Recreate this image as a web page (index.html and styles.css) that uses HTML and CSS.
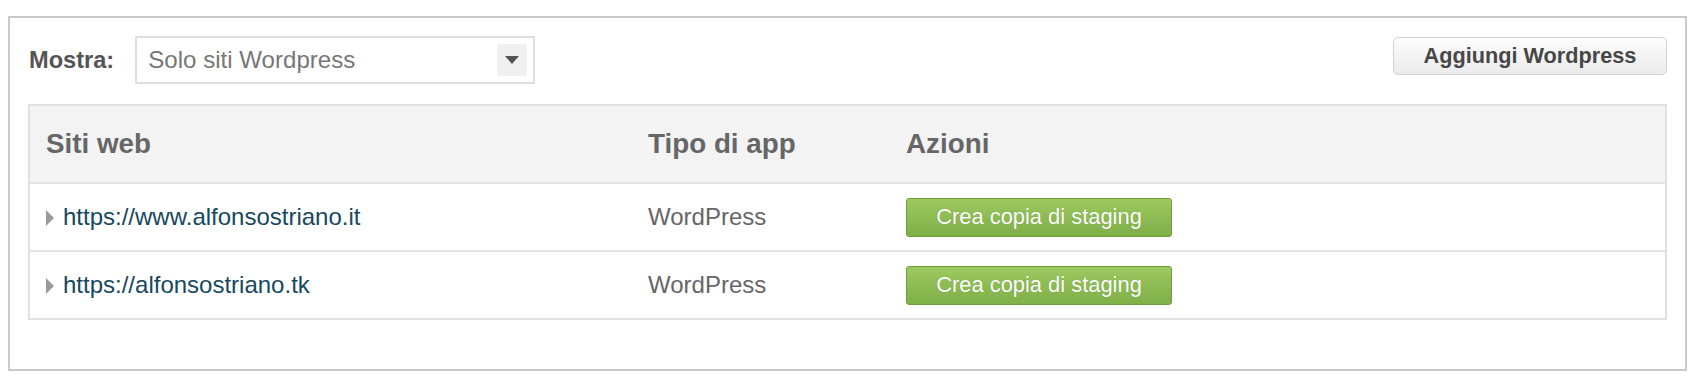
FILE: index.html
```html
<html lang="it">
<head>
  <meta charset="UTF-8" />
  <title>Siti web</title>
  <link rel="stylesheet" href="styles.css">
</head>
<body>

<div class="panel">
  <div class="toolbar">
    <span class="show_label">Mostra:</span>
    <div class="filter_select">
      <span class="filter_value">Solo siti Wordpress</span>
      <span class="filter_arrow"><span class="arrow_down"></span></span>
    </div>
    <button class="add_button" type="button">Aggiungi Wordpress</button>
  </div>

  <table class="sites">
    <thead>
      <tr>
        <th class="col_site">Siti web</th>
        <th class="col_type">Tipo di app</th>
        <th>Azioni</th>
      </tr>
    </thead>
    <tbody>
      <tr>
        <td><span class="expand"></span><a class="site_link" href="#">https://www.alfonsostriano.it</a></td>
        <td class="app_type">WordPress</td>
        <td><button class="staging_button" type="button">Crea copia di staging</button></td>
      </tr>
      <tr>
        <td><span class="expand"></span><a class="site_link" href="#">https://alfonsostriano.tk</a></td>
        <td class="app_type">WordPress</td>
        <td><button class="staging_button" type="button">Crea copia di staging</button></td>
      </tr>
    </tbody>
  </table>
</div>

</body>
</html>
```

FILE: styles.css
```css
*{box-sizing:border-box; margin:0; padding:0;}
body{background-color:#fff; font-family:"Liberation Sans", Arial, sans-serif; color:#666;}

.panel{margin:16px 15px 0 8px; border:2px solid #c9c9c9; padding:18px 18px 49px 18px;}

/* filter bar */
.toolbar{display:flex; align-items:flex-start; margin-bottom:20px;}
.show_label{font-size:23.6px; font-weight:bold; color:#555; line-height:48px; margin:0 21px 0 1px;}
.filter_select{width:400px; height:48px; border:2px solid #dedede; display:flex; align-items:center;
               justify-content:space-between; padding:0 6px 0 11px;}
.filter_value{font-size:24.1px; color:#777;}
.filter_arrow{width:30px; height:32px; background-color:#f0f0f0; display:flex; align-items:center; justify-content:center;}
.arrow_down{width:0; height:0; border-left:7px solid transparent; border-right:7px solid transparent;
            border-top:8px solid #555;}
.add_button{margin-left:auto; margin-top:1px; width:274px; height:38px; border:1px solid #d2d2d2; border-radius:5px;
            background:linear-gradient(#fdfdfd, #ebebeb); font-family:inherit; font-size:21.7px; font-weight:bold; color:#474747;}

/* sites table */
.sites{width:100%; border:2px solid #e0e0e0; border-spacing:0; border-collapse:separate;}
.sites th{background-color:#f3f3f3; height:76px; text-align:left; font-size:27.8px; font-weight:bold; color:#666; padding:0 17px 0 16px;}
.sites td{height:68px; border-top:2px solid #e3e3e3; padding:0 17px 0 16px; font-size:24px; vertical-align:middle;}
.col_site{width:602px;}
.col_type{width:258px;}
.expand{display:inline-block; width:0; height:0; border-top:8px solid transparent; border-bottom:8px solid transparent;
        border-left:8px solid #9a9a9a; margin-right:9px; vertical-align:-1px;}
.site_link{color:#17485f; text-decoration:none;}
.app_type{color:#666;}
.staging_button{width:266px; height:39px; border:1px solid #6f9d3e; border-radius:3px;
                background:linear-gradient(#9cc960, #7faf47); color:#fff; font-family:inherit; font-size:21.9px;
                text-shadow:0 0 1px rgba(60,90,30,0.4);}
```
